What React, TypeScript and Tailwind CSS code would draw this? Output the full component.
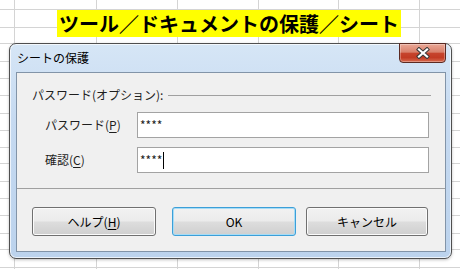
import React from "react";

const rowHeights = [
	"h-[10px]",
	"h-[18px]",
	"h-[16px]",
	"h-[18px]",
	"h-[17px]",
	"h-[17px]",
	"h-[18px]",
	"h-[17px]",
	"h-[17px]",
	"h-[16px]",
	"h-[18px]",
	"h-[17px]",
	"h-[17px]",
	"h-[18px]",
	"h-[16px]",
	"h-[18px]",
	"h-[2px]",
];

const colWidths = [
	"w-[15px]",
	"w-[82px]",
	"w-[81px]",
	"w-[81px]",
	"w-[80px]",
	"w-[81px]",
	"w-[40px]",
];

const font = "font-['Noto_Sans_CJK_JP','Noto_Sans',sans-serif]";

function Sheet() {
	return (
		<div className="flex flex-col">
			{rowHeights.map((h, r) => (
				<div key={r} className={`flex ${h}`}>
					{colWidths.map((w, c) => (
						<div
							key={c}
							className={`${w} shrink-0 border-b border-[#d4d4d4] ${c < colWidths.length - 1 ? "border-r" : ""}`}
						/>
					))}
				</div>
			))}
		</div>
	);
}

function CloseButton() {
	return (
		<div className="absolute right-[5px] top-[-1px] flex h-[20px] w-[47px] items-center justify-center rounded-b-[4px] border border-[#5b2a22] bg-[linear-gradient(to_bottom,#eaa897_0%,#d9816c_45%,#c6442d_52%,#c23b24_75%,#d76a4f_100%)] shadow-[inset_0_0_0_1px_rgba(255,255,255,0.3)]">
			<svg width="14" height="12" viewBox="0 0 14 12">
				<path
					d="M3 2.5 L11 9.5 M11 2.5 L3 9.5"
					stroke="#3a3a3a"
					strokeWidth="4.2"
					strokeLinecap="square"
					fill="none"
				/>
				<path
					d="M3 2.5 L11 9.5 M11 2.5 L3 9.5"
					stroke="#ffffff"
					strokeWidth="2.2"
					strokeLinecap="square"
					fill="none"
				/>
			</svg>
		</div>
	);
}

function Field({ value, caret }: { value: string; caret?: boolean }) {
	return (
		<div className="flex h-[26px] w-[292px] items-center border border-[#a3a3a3] bg-white pl-[2px] text-[12px] leading-[16px]">
			<span>{value}</span>
			{caret && <span className="ml-px inline-block h-[17px] w-px bg-black" />}
		</div>
	);
}

function DialogButton({
	children,
	width,
	primary,
}: {
	children: React.ReactNode;
	width: string;
	primary?: boolean;
}) {
	return (
		<button
			type="button"
			className={`flex h-[29px] ${width} items-center justify-center rounded-[3px] border text-[12px] leading-[16px] text-black bg-[linear-gradient(to_bottom,#f2f2f2_0%,#ebebeb_48%,#dddddd_52%,#cfcfcf_100%)] ${
				primary
					? "border-[#3c9fd8] shadow-[inset_0_0_0_1px_#a6dcf6]"
					: "border-[#707070] shadow-[inset_0_0_0_1px_#fbfbfb]"
			}`}
		>
			{children}
		</button>
	);
}

export default function App() {
	return (
		<div className={`relative h-[269px] w-[460px] overflow-hidden bg-white ${font}`}>
			<Sheet />

			<div className="absolute left-[57px] top-[10px] flex h-[27px] w-[344px] items-center justify-center bg-[#ffff00] text-[20px] font-bold leading-[24px] text-black">
				ツール／ドキュメントの保護／シート
			</div>

			<div className="absolute left-[9px] top-[43px] flex h-[216px] w-[443px] flex-col rounded-[7px] border border-[#4f4f4f] bg-[linear-gradient(to_bottom,#d6e6f6_0%,#c6daf1_35%,#bcd3ed_100%)] pb-[6px] pl-[6px] pr-[5px] shadow-[inset_0_0_0_1px_rgba(255,255,255,0.7),0_1px_3px_rgba(0,0,0,0.25)]">
				<div className="flex h-[28px] items-center pl-[1px] text-[12px] leading-[16px] text-black">
					シートの保護
				</div>
				<CloseButton />

				<div className="flex flex-1 flex-col border border-[#8294a8] bg-[#f0f0f0] text-[12px] leading-[16px] text-[#1e1e1e]">
					<div className="flex items-center gap-[5px] pl-[15px] pr-[14px] pt-[14px]">
						<span>パスワード(オプション):</span>
						<span className="h-px flex-1 bg-[#a0a0a0]" />
					</div>

					<div className="mt-[9px] flex flex-col gap-[9px] pl-[28px]">
						<div className="flex items-center">
							<span className="w-[92px]">
								パスワード(<span className="underline underline-offset-2">P</span>)
							</span>
							<Field value="****" />
						</div>
						<div className="flex items-center">
							<span className="w-[92px]">
								確認(<span className="underline underline-offset-2">C</span>)
							</span>
							<Field value="****" caret />
						</div>
					</div>

					<div className="mt-[15px] h-px bg-[#a0a0a0]" />

					<div className="mt-[18px] flex pl-[15px]">
						<DialogButton width="w-[124px]">
							ヘルプ(<span className="underline underline-offset-2">H</span>)
						</DialogButton>
						<div className="ml-[16px]">
							<DialogButton width="w-[124px]" primary>
								OK
							</DialogButton>
						</div>
						<div className="ml-[10px]">
							<DialogButton width="w-[122px]">キャンセル</DialogButton>
						</div>
					</div>
				</div>
			</div>
		</div>
	);
}
